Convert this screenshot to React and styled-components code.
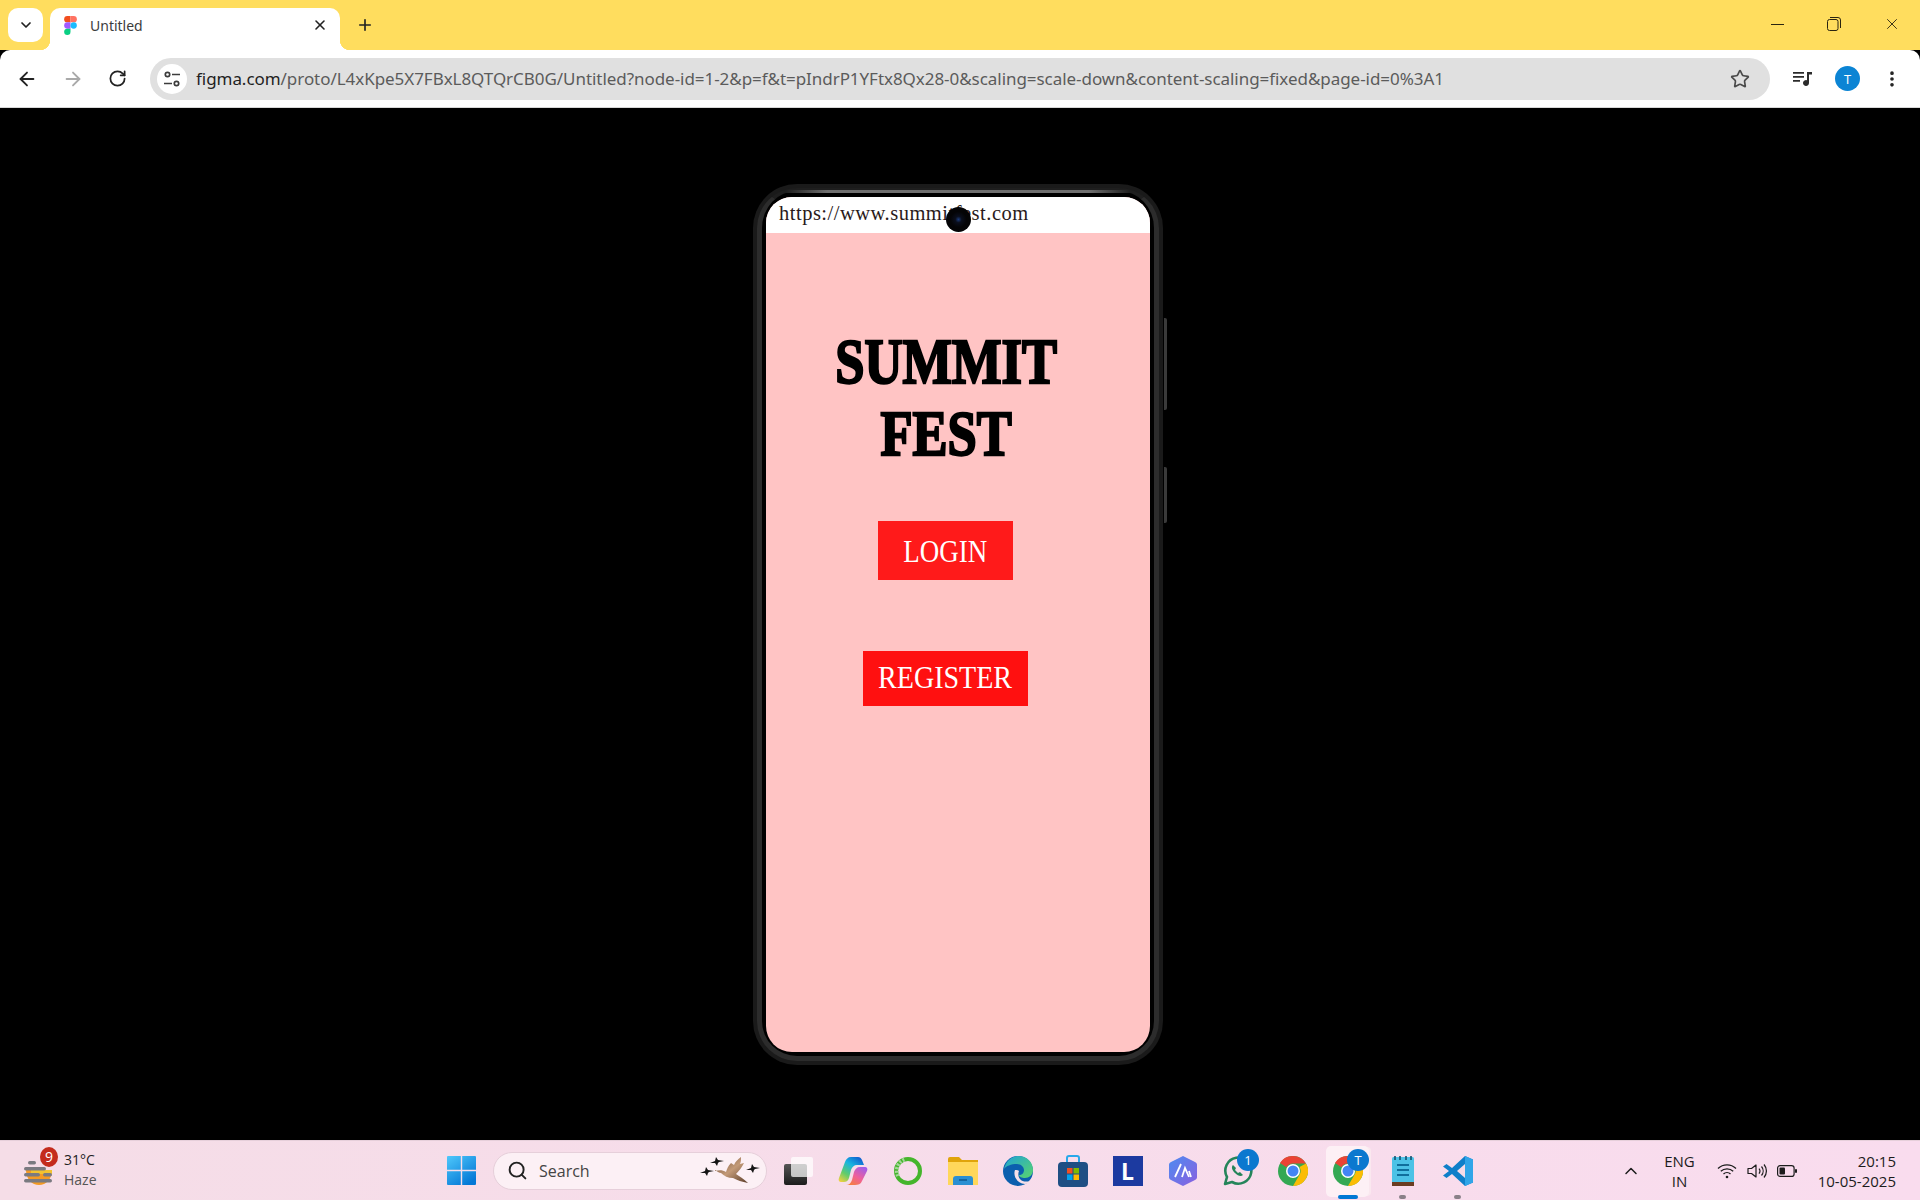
import styled, { createGlobalStyle } from "styled-components";
import { ArrowLeft, ArrowRight, ChevronDown, ChevronUp, EllipsisVertical, Plus, RotateCw, Search, Star, X } from "lucide-react";

const URL_HOST = "figma.com";
const URL_PATH = "/proto/L4xKpe5X7FBxL8QTQrCB0G/Untitled?node-id=1-2&p=f&t=pIndrP1YFtx8Qx28-0&scaling=scale-down&content-scaling=fixed&page-id=0%3A1";

function FigmaLogo() {
  return (
    <svg width="13" height="19" viewBox="0 0 12 18">
      <path d="M3 0h3v6H3a3 3 0 0 1 0-6z" fill="#f24e1e" />
      <path d="M6 0h3a3 3 0 0 1 0 6H6z" fill="#ff7262" />
      <path d="M3 6h3v6H3a3 3 0 0 1 0-6z" fill="#a259ff" />
      <circle cx="9" cy="9" r="3" fill="#1abcfe" />
      <path d="M3 12h3v3a3 3 0 1 1-3-3z" fill="#0acf83" />
    </svg>
  );
}

function TuneIcon() {
  return (
    <svg width="18" height="18" viewBox="0 0 18 18" fill="none" stroke="#3c3c3c" strokeWidth="1.7">
      <circle cx="4.5" cy="4.5" r="2.2" />
      <path d="M9 4.5h8M1 13.5h8" />
      <circle cx="13.5" cy="13.5" r="2.2" />
    </svg>
  );
}

function MediaIcon() {
  return (
    <svg width="20" height="16" viewBox="0 0 20 16" fill="#2b2b2b">
      <path d="M0 1h11v1.7H0zM0 5h11v1.7H0zM0 9h7v1.7H0z" />
      <path d="M14 1h5v2.6h-3V12a3 3 0 1 1-2-2.8z" />
    </svg>
  );
}

function RestoreIcon() {
  return (
    <svg width="14" height="14" viewBox="0 0 14 14" fill="none" stroke="#2a2410" strokeWidth="1">
      <rect x="0.5" y="2.5" width="10.5" height="11" rx="2" />
      <path d="M3 .5h8a2.5 2.5 0 0 1 2.5 2.5v8" />
    </svg>
  );
}

function WeatherIcon() {
  return (
    <svg width="32" height="36" viewBox="0 0 32 36">
      <path d="M3 17h26c0 9-6 15-13 15S3 26 3 17z" fill="#f59a23" />
      <path d="M8 17h21v4H8z" fill="#f2c230" />
      <g fill="#7a7a80">
        <rect x="5" y="8" width="8" height="3.4" rx="1.7" />
        <rect x="1" y="14" width="22" height="3.4" rx="1.7" />
        <rect x="1" y="20" width="16" height="3.4" rx="1.7" />
        <rect x="20" y="20" width="9" height="3.4" rx="1.7" />
        <rect x="1" y="26" width="28" height="3.4" rx="1.7" />
      </g>
    </svg>
  );
}

function WindowsLogo() {
  return (
    <svg width="29" height="29" viewBox="0 0 29 29">
      <defs>
        <linearGradient id="win" x1="0" y1="0" x2="0.7" y2="1">
          <stop offset="0" stopColor="#4fc8fb" />
          <stop offset="1" stopColor="#0478d6" />
        </linearGradient>
      </defs>
      <path d="M1 0h12.8v13.8H0V1a1 1 0 0 1 1-1zM15.2 0H28a1 1 0 0 1 1 1v12.8H15.2zM0 15.2h13.8V29H1a1 1 0 0 1-1-1zM15.2 15.2H29V28a1 1 0 0 1-1 1H15.2z" fill="url(#win)" />
    </svg>
  );
}

const BIRD = "M-7 1l5-2 1-4 2 3 6 1-5 1-1 1-1 3-2-3z";

function GooseDoodle() {
  return (
    <svg width="62" height="30" viewBox="0 0 62 30">
      <defs>
        <linearGradient id="goose" x1="0" y1="0" x2="1" y2="1">
          <stop offset="0" stopColor="#6a4a32" />
          <stop offset="0.5" stopColor="#c39a78" />
          <stop offset="1" stopColor="#5a3c28" />
        </linearGradient>
      </defs>
      <path d="M15 15c4-1 8-1 11 1 1-3 2-6 5-9l3 2c1-3 4-6 7-8 0 3 0 5-1 7l4-1c-2 4-5 8-8 11 3 2 8 5 12 9-6-1-11-3-15-5-5 0-9-2-12-5-2 0-4-2-6-3z" fill="url(#goose)" />
      <g fill="#151515">
        <path d={BIRD} transform="translate(17 6)" />
        <path d={BIRD} transform="translate(7 16)" />
        <path d={BIRD} transform="translate(53 13)" />
      </g>
    </svg>
  );
}

function TaskViewIcon() {
  return (
    <svg width="30" height="30" viewBox="0 0 30 30">
      <defs>
        <linearGradient id="taskBack" x1="0" y1="0" x2="0" y2="1">
          <stop offset="0" stopColor="#555" />
          <stop offset="1" stopColor="#1c1c1c" />
        </linearGradient>
      </defs>
      <rect x="1" y="8" width="23" height="21" rx="2" fill="url(#taskBack)" />
      <rect x="8" y="1" width="22" height="20" rx="2" fill="#fff" fillOpacity="0.72" />
    </svg>
  );
}

function CopilotIcon() {
  return (
    <svg width="30" height="28" viewBox="0 0 30 28">
      <defs>
        <linearGradient id="copA" x1="0.8" y1="0" x2="0.1" y2="1">
          <stop offset="0" stopColor="#0f5fd0" />
          <stop offset="0.35" stopColor="#18b4e0" />
          <stop offset="0.7" stopColor="#62cc6a" />
          <stop offset="1" stopColor="#f0d040" />
        </linearGradient>
        <linearGradient id="copB" x1="0.9" y1="0" x2="0.2" y2="1">
          <stop offset="0" stopColor="#9a5cf0" />
          <stop offset="0.55" stopColor="#f0609a" />
          <stop offset="1" stopColor="#f5803a" />
        </linearGradient>
      </defs>
      <path d="M13 0h7c2 0 3 1 4 3l2 5h-7c-3 0-5 2-6 5l-2 8c-1 3-3 4-5 4H3c-2 0-3-2-2-4l6-16c1-3 3-5 6-5z" fill="url(#copA)" />
      <path d="M8 28c3 0 5-2 6-5l2-8c1-3 3-5 6-5h5c2 0 3 2 2 4l-5 10c-1 3-4 4-7 4z" fill="url(#copB)" />
    </svg>
  );
}

function RingIcon() {
  return (
    <svg width="30" height="30" viewBox="0 0 30 30" fill="none">
      <circle cx="15" cy="15" r="12" stroke="#45b52c" strokeWidth="4" />
      <path d="M5 20A12 12 0 0 1 12 3.4" stroke="#a5d69a" strokeWidth="4" strokeDasharray="2 1.5" />
    </svg>
  );
}

function FolderIcon() {
  return (
    <svg width="30" height="28" viewBox="0 0 30 28">
      <path d="M0 2a2 2 0 0 1 2-2h9l3 3h16v6H0z" fill="#e0a40a" />
      <path d="M0 5h30v23H0z" fill="#ffd75a" />
      <path d="M5 28v-6a3 3 0 0 1 3-3h14a3 3 0 0 1 3 3v6z" fill="#2a8fd2" />
      <path d="M11 23h8" stroke="#0f5c94" strokeWidth="1.6" />
    </svg>
  );
}

function EdgeIcon() {
  return (
    <svg width="30" height="30" viewBox="0 0 30 30">
      <defs>
        <linearGradient id="edgeTop" x1="0" y1="0" x2="1" y2="1">
          <stop offset="0" stopColor="#1fa2d6" />
          <stop offset="1" stopColor="#5ad56c" />
        </linearGradient>
      </defs>
      <circle cx="15" cy="15" r="15" fill="#0b5fae" />
      <path d="M1 13C3 5 9 0 15 0c9 0 15 6 15 14 0 5-4 8-8 8-3 0-6-1-6-3 3 0 5-2 5-5 0-3-3-6-7-6-6 0-11 2-13 5z" fill="url(#edgeTop)" />
      <path d="M12 14c-2 5 1 13 10 14 2 0 4-1 5-3-3 1-8 1-10-2-2-2-2-6-1-8-1-1-3-1-4-1z" fill="#f4dfe8" />
    </svg>
  );
}

function StoreIcon() {
  return (
    <svg width="30" height="32" viewBox="0 0 30 32">
      <path d="M9 8V3a2 2 0 0 1 2-2h8a2 2 0 0 1 2 2v5" fill="none" stroke="#28a8ea" strokeWidth="2" />
      <rect y="7" width="30" height="25" rx="4" fill="#1f4f84" />
      <rect x="9" y="13" width="5.5" height="5.5" fill="#f25022" />
      <rect x="15.5" y="13" width="5.5" height="5.5" fill="#7fba00" />
      <rect x="9" y="19.5" width="5.5" height="5.5" fill="#00a4ef" />
      <rect x="15.5" y="19.5" width="5.5" height="5.5" fill="#ffb900" />
    </svg>
  );
}

function LensTile() {
  return <LetterTile>L</LetterTile>;
}

function ArcIcon() {
  return (
    <svg width="28" height="30" viewBox="0 0 28 30">
      <defs>
        <linearGradient id="arc" x1="0" y1="0" x2="1" y2="1">
          <stop offset="0" stopColor="#4d8cf0" />
          <stop offset="1" stopColor="#8a5fe0" />
        </linearGradient>
      </defs>
      <path d="M14 0l12 6a3 3 0 0 1 2 3v12a3 3 0 0 1-2 3l-12 6-12-6a3 3 0 0 1-2-3V9a3 3 0 0 1 2-3z" fill="url(#arc)" />
      <path d="M6 21l6-13M13 21l3-9 4 9M22 21l-2-6" stroke="#fff" strokeWidth="1.8" fill="none" />
    </svg>
  );
}

function WhatsAppIcon() {
  return (
    <svg width="30" height="30" viewBox="0 0 30 30" fill="none">
      <path d="M2 28l2-7A13 13 0 1 1 9 26z" stroke="#25855a" strokeWidth="2.6" strokeLinejoin="round" />
      <path d="M10 9c-2 2-1 5 2 8s6 4 8 2l-3-3-2 1-3-3 1-2z" fill="#25855a" />
    </svg>
  );
}

function ChromeIcon() {
  return (
    <svg width="30" height="30" viewBox="0 0 30 30">
      <circle cx="15" cy="15" r="15" fill="#34a853" />
      <path d="M15 0a15 15 0 0 1 13 7.5H15a7.5 7.5 0 0 0-6.5 3.7L2 7A15 15 0 0 1 15 0z" fill="#ea4335" />
      <path d="M28 7.5A15 15 0 0 1 15 30l6.5-11.2A7.5 7.5 0 0 0 21.5 11z" fill="#fbbc04" />
      <circle cx="15" cy="15" r="7" fill="#fff" />
      <circle cx="15" cy="15" r="5.5" fill="#4285f4" />
    </svg>
  );
}

function NotepadIcon() {
  return (
    <svg width="22" height="30" viewBox="0 0 22 30">
      <rect y="1" width="22" height="27" rx="1.5" fill="#4cc2e6" />
      <rect y="26" width="22" height="4" fill="#6b3d22" />
      <path d="M5 9h12M5 14h12M5 19h12" stroke="#0f6f9c" strokeWidth="2" />
      <path d="M3 0v4M8 0v4M14 0v4M19 0v4" stroke="#13526e" strokeWidth="1.6" />
    </svg>
  );
}

function VSCodeIcon() {
  return (
    <svg width="30" height="30" viewBox="0 0 30 30">
      <path d="M22 0l8 3.5v23L22 30 9 18l-5.5 4L0 19.5 6 15 0 10.5 3.5 8 9 12z" fill="#0f7fc9" />
      <path d="M22 0l8 3.5v23L22 30z" fill="#30a5e8" />
      <path d="M22 8l-8 7 8 7z" fill="#f6dce8" />
    </svg>
  );
}

function WifiIcon() {
  return (
    <svg width="20" height="16" viewBox="0 0 20 16" fill="none" stroke="#1c1c1c" strokeWidth="1.3">
      <path d="M1 5.5a13 13 0 0 1 18 0M3.8 8.3a9 9 0 0 1 12.4 0M6.5 11a5 5 0 0 1 7 0" />
      <circle cx="10" cy="14" r="1.3" fill="#1c1c1c" stroke="none" />
    </svg>
  );
}

function SpeakerIcon() {
  return (
    <svg width="20" height="18" viewBox="0 0 20 18" fill="none" stroke="#1c1c1c" strokeWidth="1.2">
      <path d="M1 6.5h3.5L9 3v12l-4.5-3.500H1z" strokeLinejoin="round" />
      <path d="M12 6.500a4 4 0 0 1 0 5M14.500 4.500a7 7 0 0 1 0 9M17 2.500a10 10 0 0 1 0 13" />
    </svg>
  );
}

function BatteryIcon() {
  return (
    <svg width="20" height="12" viewBox="0 0 20 12">
      <rect x="0.6" y="0.6" width="16.5" height="10.8" rx="2.5" fill="none" stroke="#1c1c1c" strokeWidth="1.2" />
      <rect x="2.5" y="2.5" width="5.5" height="7" rx="1" fill="#1c1c1c" />
      <rect x="18" y="4" width="2" height="4" rx="1" fill="#1c1c1c" />
    </svg>
  );
}

const TASK_ICONS = [
  { id: "task", Icon: TaskViewIcon },
  { id: "copilot", Icon: CopilotIcon },
  { id: "ring", Icon: RingIcon },
  { id: "folder", Icon: FolderIcon },
  { id: "edge", Icon: EdgeIcon },
  { id: "store", Icon: StoreIcon },
  { id: "lens", Icon: LensTile },
  { id: "arc", Icon: ArcIcon },
  { id: "whatsapp", Icon: WhatsAppIcon, badge: "1" },
  { id: "chrome", Icon: ChromeIcon },
  { id: "chrome-active", Icon: ChromeIcon, badge: "T", active: true },
  { id: "notepad", Icon: NotepadIcon, running: true },
  { id: "vscode", Icon: VSCodeIcon, running: true },
];

export default function App() {
  return (
    <Page>
      <GlobalStyle />
      <TabStrip>
        <TabSearch>
          <ChevronDown size={16} strokeWidth={2.6} color="#222" />
        </TabSearch>
        <Tab>
          <FigmaLogo />
          <TabTitle>Untitled</TabTitle>
          <X size={16} strokeWidth={2.4} color="#222" />
        </Tab>
        <NewTab>
          <Plus size={18} strokeWidth={2.2} color="#222" />
        </NewTab>
        <WindowControls>
          <MinimizeLine />
          <RestoreIcon />
          <X size={18} strokeWidth={1.2} color="#2a2410" />
        </WindowControls>
      </TabStrip>

      <Toolbar>
        <NavButtons>
          <ArrowLeft size={22} strokeWidth={2} color="#222" />
          <ArrowRight size={22} strokeWidth={2} color="#a9a9a9" />
          <RotateCw size={19} strokeWidth={2.2} color="#222" />
        </NavButtons>
        <Omnibox>
          <SiteInfo>
            <TuneIcon />
          </SiteInfo>
          <UrlText>
            {URL_HOST}
            <UrlPath>{URL_PATH}</UrlPath>
          </UrlText>
          <Star size={20} strokeWidth={2} color="#4a4a4a" />
        </Omnibox>
        <ToolbarActions>
          <MediaIcon />
          <Avatar>T</Avatar>
          <EllipsisVertical size={20} strokeWidth={2.4} color="#222" />
        </ToolbarActions>
      </Toolbar>

      <Stage>
        <Phone>
          <SideKey $top={134} $height={92} />
          <SideKey $top={283} $height={56} />
          <Bezel>
            <Screen>
              <AddressBar>https://www.summitfest.com</AddressBar>
              <Camera />
              <AppBody>
                <Title>
                  <TitleLine>SUMMIT</TitleLine>
                  <TitleLine>FEST</TitleLine>
                </Title>
                <LoginButton>
                  <ButtonLabel $squeeze={0.87}>LOGIN</ButtonLabel>
                </LoginButton>
                <RegisterButton>
                  <ButtonLabel $squeeze={0.905}>REGISTER</ButtonLabel>
                </RegisterButton>
              </AppBody>
            </Screen>
          </Bezel>
        </Phone>
      </Stage>

      <Taskbar>
        <WeatherWidget>
          <WeatherGlyph>
            <WeatherIcon />
            <AlertBadge>9</AlertBadge>
          </WeatherGlyph>
          <StackedText>
            <span>31°C</span>
            <Muted>Haze</Muted>
          </StackedText>
        </WeatherWidget>
        <WindowsLogo />
        <SearchBox>
          <Search size={21} strokeWidth={2.2} color="#222" />
          <SearchLabel>Search</SearchLabel>
          <GooseDoodle />
        </SearchBox>
        <TaskIcons>
          {TASK_ICONS.map(({ id, Icon, badge, active, running }) => (
            <TaskSlot key={id} $active={active}>
              <Icon />
              {badge && <CountBadge>{badge}</CountBadge>}
              {active && <ActiveBar />}
              {running && <RunningDot />}
            </TaskSlot>
          ))}
        </TaskIcons>
        <Tray>
          <ChevronUp size={20} strokeWidth={1.8} color="#1c1c1c" />
          <LangBlock>
            <span>ENG</span>
            <span>IN</span>
          </LangBlock>
          <StatusIcons>
            <WifiIcon />
            <SpeakerIcon />
            <BatteryIcon />
          </StatusIcons>
          <Clock>
            <span>20:15</span>
            <span>10-05-2025</span>
          </Clock>
        </Tray>
      </Taskbar>
    </Page>
  );
}

const GlobalStyle = createGlobalStyle`
  html, body {
    margin: 0;
    padding: 0;
    background: #000;
  }
  #root {
    width: 1920px;
    height: 1200px;
    overflow: hidden;
  }
`;

const Page = styled.div`
  display: flex;
  flex-direction: column;
  width: 1920px;
  height: 1200px;
  background: #000;
  font-family: "Open Sans", "Noto Sans", sans-serif;
`;

const TabStrip = styled.header`
  display: flex;
  align-items: flex-end;
  height: 50px;
  flex-shrink: 0;
  padding-left: 8px;
  background: #ffdd5e;
`;

const TabSearch = styled.div`
  display: flex;
  align-items: center;
  justify-content: center;
  align-self: flex-start;
  width: 35px;
  height: 34px;
  margin-top: 8px;
  border-radius: 10px;
  background: #fff;
`;

const Tab = styled.div`
  position: relative;
  display: flex;
  align-items: center;
  gap: 13px;
  width: 290px;
  height: 42px;
  margin-left: 7px;
  padding: 0 12px 8px 14px;
  box-sizing: border-box;
  border-radius: 10px 10px 0 0;
  background: #fff;

  &::before,
  &::after {
    content: "";
    position: absolute;
    bottom: 0;
    width: 10px;
    height: 10px;
  }
  &::before {
    left: -10px;
    background: radial-gradient(circle at 0 0, #ffdd5e 10px, #fff 10.5px);
  }
  &::after {
    right: -10px;
    background: radial-gradient(circle at 100% 0, #ffdd5e 10px, #fff 10.5px);
  }
`;

const TabTitle = styled.span`
  flex: 1;
  font-size: 14px;
  color: #3c3c3c;
  font-family: "Noto Sans", sans-serif;
`;

const NewTab = styled.div`
  display: flex;
  align-items: center;
  justify-content: center;
  align-self: flex-start;
  width: 28px;
  height: 28px;
  margin: 11px 0 0 11px;
`;

const WindowControls = styled.div`
  display: flex;
  align-items: center;
  align-self: flex-start;
  justify-content: space-between;
  width: 130px;
  height: 18px;
  margin: 15px 19px 0 auto;
`;

const MinimizeLine = styled.i`
  display: block;
  width: 13px;
  height: 1px;
  background: #2a2410;
`;

const Toolbar = styled.div`
  display: flex;
  align-items: center;
  height: 58px;
  flex-shrink: 0;
  box-sizing: border-box;
  border-radius: 10px 10px 0 0;
  border-bottom: 1px solid #d8d8d8;
  background: #fff;
`;

const NavButtons = styled.div`
  display: flex;
  align-items: center;
  gap: 24px;
  width: 150px;
  padding-left: 16px;
  box-sizing: border-box;
`;

const Omnibox = styled.div`
  display: flex;
  align-items: center;
  width: 1620px;
  height: 42px;
  padding: 0 20px 0 7px;
  box-sizing: border-box;
  border-radius: 21px;
  background: #e0e0e0;
`;

const SiteInfo = styled.div`
  display: flex;
  align-items: center;
  justify-content: center;
  width: 30px;
  height: 30px;
  border-radius: 50%;
  background: #fff;
`;

const UrlText = styled.div`
  flex: 1;
  margin-left: 9px;
  font-family: "Noto Sans", sans-serif;
  font-size: 17px;
  letter-spacing: -0.05px;
  white-space: nowrap;
  color: #1f1f1f;
`;

const UrlPath = styled.span`
  color: #5b5b5b;
`;

const ToolbarActions = styled.div`
  display: flex;
  align-items: center;
  gap: 22px;
  padding-left: 23px;
`;

const Avatar = styled.div`
  display: flex;
  align-items: center;
  justify-content: center;
  width: 25px;
  height: 25px;
  border-radius: 50%;
  background: #0b84d4;
  color: #fff;
  font-size: 13px;
`;

const Stage = styled.main`
  display: flex;
  justify-content: center;
  flex: 1;
  padding: 76px 4px 0 0;
  background: #000;
`;

const Phone = styled.div`
  position: relative;
  width: 410px;
  height: 881px;
`;

const SideKey = styled.i`
  position: absolute;
  right: -4px;
  top: ${(p) => p.$top}px;
  width: 3px;
  height: ${(p) => p.$height}px;
  border-radius: 0 2px 2px 0;
  background: #3a3a3a;
`;

const Bezel = styled.div`
  position: relative;
  box-sizing: border-box;
  height: calc(100% - 8px);
  margin: 4px;
  padding: 6px 4px 4px;
  border: 5px solid #2c2c2c;
  border-top-width: 3px;
  border-top-color: #1e1e1e;
  border-radius: 40px;
  background: #000;
  box-shadow: 0 0 0 4px #1a1a1a;

  &::before {
    content: "";
    position: absolute;
    top: -1px;
    left: 24px;
    right: 24px;
    height: 3px;
    background: linear-gradient(90deg, #1e1e1e, #707070 12%, #707070 88%, #1e1e1e);
  }
`;

const Screen = styled.div`
  position: relative;
  display: flex;
  flex-direction: column;
  height: 855px;
  overflow: hidden;
  border-radius: 26px;
  background: #ffc4c4;
`;

const AddressBar = styled.div`
  height: 36px;
  flex-shrink: 0;
  padding-left: 13px;
  box-sizing: border-box;
  background: #fff;
  font-family: "Liberation Serif", serif;
  font-size: 20.5px;
  letter-spacing: 0.5px;
  line-height: 32px;
  color: #2a1a1a;
`;

const Camera = styled.div`
  position: absolute;
  top: 10px;
  left: 180px;
  width: 25px;
  height: 25px;
  border-radius: 50%;
  background: radial-gradient(circle, #1c3a78 0, #0a0e1c 18%, #040406 45%);
`;

const AppBody = styled.div`
  display: flex;
  flex-direction: column;
  align-items: center;
  padding: 93px 25px 0 0;
`;

const Title = styled.h1`
  margin: 0 0 51px;
  font-family: "Liberation Serif", serif;
  font-size: 64px;
  font-weight: 700;
  line-height: 72px;
  text-align: center;
  color: #000;
  -webkit-text-stroke: 2.4px #000;
`;

const TitleLine = styled.div`
  transform: translateX(1px) scaleX(0.82);
`;

const ActionButton = styled.button`
  display: flex;
  align-items: center;
  justify-content: center;
  border: none;
  color: #fff;
  font-family: "Liberation Serif", serif;
  font-size: 31px;
`;

const ButtonLabel = styled.span`
  display: inline-block;
  transform: scaleX(${(p) => p.$squeeze});
`;

const LoginButton = styled(ActionButton)`
  width: 135px;
  height: 59px;
  margin-bottom: 71px;
  padding: 2px 0 0;
  background: #ff1a1a;
`;

const RegisterButton = styled(ActionButton)`
  width: 165px;
  height: 55px;
  padding: 0 0 2px;
  background: #ff1010;
`;

const Taskbar = styled.footer`
  display: flex;
  align-items: center;
  height: 60px;
  flex-shrink: 0;
  box-sizing: border-box;
  border-top: 1px solid #e6cfda;
  background: linear-gradient(90deg, #f5dde7, #f9dcee);
`;

const WeatherWidget = styled.div`
  display: flex;
  align-items: center;
  gap: 9px;
  width: 447px;
  padding-left: 23px;
  box-sizing: border-box;
`;

const WeatherGlyph = styled.div`
  position: relative;
  display: flex;
`;

const AlertBadge = styled.span`
  position: absolute;
  top: -6px;
  left: 17px;
  width: 18px;
  height: 20px;
  border-radius: 50%;
  background: #c42b1c;
  color: #fff;
  font-size: 14px;
  line-height: 20px;
  text-align: center;
`;

const StackedText = styled.div`
  display: flex;
  flex-direction: column;
  margin-top: -2px;
  font-size: 14px;
  line-height: 20px;
  color: #222;
`;

const Muted = styled.span`
  color: #555;
`;

const SearchBox = styled.div`
  display: flex;
  align-items: center;
  width: 274px;
  height: 38px;
  margin-left: 17px;
  padding: 0 4px 0 13px;
  box-sizing: border-box;
  border: 1px solid #e6cfda;
  border-radius: 19px;
  background: #fcf0f5;
`;

const SearchLabel = styled.span`
  flex: 1;
  margin-left: 11px;
  font-size: 16px;
  color: #444;
`;

const TaskIcons = styled.div`
  display: flex;
  margin-left: 3px;
`;

const TaskSlot = styled.div`
  position: relative;
  display: flex;
  align-items: center;
  justify-content: center;
  width: 55px;
  height: 50px;

  &::before {
    content: "";
    display: ${(p) => (p.$active ? "block" : "none")};
    position: absolute;
    inset: 0 6px -1px 6px;
    border-radius: 5px;
    background: #fdf0f5;
    box-shadow: 3px 0 0 -1px #fae8ef;
  }
  & > svg,
  & > b {
    position: relative;
  }
`;

const LetterTile = styled.b`
  display: flex;
  align-items: center;
  justify-content: center;
  width: 30px;
  height: 30px;
  background: #1c3aa0;
  color: #fff;
  font-family: "Open Sans", sans-serif;
  font-size: 23px;
  font-weight: 700;
`;

const CountBadge = styled.span`
  position: absolute;
  top: 3px;
  right: 6px;
  width: 22px;
  height: 22px;
  border-radius: 50%;
  background: #0b78cf;
  color: #fff;
  font-size: 13px;
  line-height: 22px;
  text-align: center;
`;

const ActiveBar = styled.i`
  position: absolute;
  bottom: -3px;
  left: 18px;
  width: 20px;
  height: 4px;
  border-radius: 2px;
  background: #0078d4;
`;

const RunningDot = styled.i`
  position: absolute;
  bottom: -3px;
  left: 24px;
  width: 7px;
  height: 4px;
  border-radius: 2px;
  background: #8a8088;
`;

const Tray = styled.div`
  display: flex;
  align-items: center;
  margin-left: auto;
  padding-right: 24px;
  color: #1c1c1c;
  font-size: 15px;
`;

const LangBlock = styled.div`
  display: flex;
  flex-direction: column;
  align-items: center;
  margin-left: 23px;
  line-height: 20px;
`;

const StatusIcons = styled.div`
  display: flex;
  align-items: center;
  gap: 10px;
  margin-left: 22px;
`;

const Clock = styled.div`
  display: flex;
  flex-direction: column;
  align-items: flex-end;
  margin-left: 21px;
  line-height: 20px;
`;
